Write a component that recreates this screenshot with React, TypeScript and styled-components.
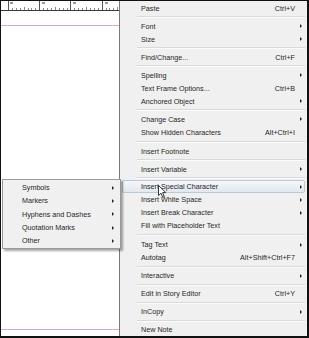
import React from "react";
import styled, { createGlobalStyle } from "styled-components";

const Global = createGlobalStyle`
  html, body { margin: 0; padding: 0; background: #fff; }
  #root { width: 309px; height: 338px; }
`;

const Frame = styled.div`
  position: relative;
  width: 309px;
  height: 338px;
  box-sizing: border-box;
  border: 1px solid #111;
  border-right-width: 2px;
  border-bottom-width: 2px;
  display: flex;
  overflow: hidden;
  font-family: "Liberation Sans", Arial, sans-serif;
  font-size: 7.2px;
  color: #262626;
`;

const Canvas = styled.div`
  width: 118px;
  flex: none;
  background: #fff;
  border-right: 1px solid #7a7a7a;
  display: flex;
  flex-direction: column;
`;

const Ruler = styled.div`
  height: 9px;
  border-bottom: 1px solid #3a3a3a;
  flex: none;
`;

const PinkGap = styled.div<{ $h: number }>`
  height: ${(p) => p.$h}px;
  flex: none;
`;

const PinkLine = styled.div`
  height: 1px;
  background: #d8a4d8;
  flex: none;
`;

const Spacer = styled.div`
  flex: 1;
`;

const Menu = styled.div`
  flex: 1;
  background: #f0f0f0;
  padding: 1px 0 0;
  display: flex;
  flex-direction: column;
`;

const Row = styled.div<{ $active?: boolean }>`
  position: relative;
  height: 13px;
  margin: 0 2px;
  box-sizing: border-box;
  display: grid;
  grid-template-columns: 1fr auto 9px;
  align-items: center;
  padding-left: 18px;
  border: 1px solid ${(p) => (p.$active ? "#bcc8d6" : "transparent")};
  border-radius: 2px;
  background: ${(p) =>
    p.$active ? "linear-gradient(#f5f7f9, #e2e8ee)" : "transparent"};
  white-space: nowrap;
  line-height: 11px;
`;

const Label = styled.span``;

const Shortcut = styled.span`
  text-align: right;
`;

const ArrowCell = styled.span`
  display: flex;
  justify-content: flex-end;
  padding-right: 2px;
`;

const Arrow = styled.i`
  display: block;
  width: 0;
  height: 0;
  border-top: 2px solid transparent;
  border-bottom: 2px solid transparent;
  border-left: 2.5px solid #222;
`;

const Sep = styled.div<{ $h?: number }>`
  height: ${(p) => p.$h ?? 5}px;
  display: flex;
  align-items: center;
  padding-left: 17px;
  padding-right: 2px;
  &::after {
    content: "";
    flex: 1;
    height: 1px;
    background: #d9d9d9;
    border-bottom: 1px solid #fbfbfb;
  }
`;

const SubMenu = styled.div`
  position: absolute;
  left: 1px;
  top: 178px;
  width: 119px;
  box-sizing: border-box;
  background: #f0f0f0;
  border: 1px solid #9a9a9a;
  box-shadow: 2px 2px 2px rgba(0, 0, 0, 0.35);
  padding: 1px 0 1px;
  display: flex;
  flex-direction: column;
  z-index: 2;
`;

const SubRow = styled.div`
  height: 13.3px;
  display: grid;
  grid-template-columns: 1fr 9px;
  align-items: center;
  padding-left: 19px;
  padding-right: 4px;
  white-space: nowrap;
`;

const Cursor = styled.svg`
  position: absolute;
  left: 157px;
  top: 184px;
  z-index: 3;
`;

type Item =
  | { t: "item"; label: string; sc?: string; sub?: boolean; active?: boolean }
  | { t: "sep"; h?: number };

const items: Item[] = [
  { t: "item", label: "Paste", sc: "Ctrl+V" },
  { t: "sep" },
  { t: "item", label: "Font", sub: true },
  { t: "item", label: "Size", sub: true },
  { t: "sep" },
  { t: "item", label: "Find/Change...", sc: "Ctrl+F" },
  { t: "sep" },
  { t: "item", label: "Spelling", sub: true },
  { t: "item", label: "Text Frame Options...", sc: "Ctrl+B" },
  { t: "item", label: "Anchored Object", sub: true },
  { t: "sep" },
  { t: "item", label: "Change Case", sub: true },
  { t: "item", label: "Show Hidden Characters", sc: "Alt+Ctrl+I" },
  { t: "sep", h: 6 },
  { t: "item", label: "Insert Footnote" },
  { t: "sep" },
  { t: "item", label: "Insert Variable", sub: true },
  { t: "sep" },
  { t: "item", label: "Insert Special Character", sub: true, active: true },
  { t: "item", label: "Insert White Space", sub: true },
  { t: "item", label: "Insert Break Character", sub: true },
  { t: "item", label: "Fill with Placeholder Text" },
  { t: "sep", h: 6 },
  { t: "item", label: "Tag Text", sub: true },
  { t: "item", label: "Autotag", sc: "Alt+Shift+Ctrl+F7" },
  { t: "sep" },
  { t: "item", label: "Interactive", sub: true },
  { t: "sep" },
  { t: "item", label: "Edit in Story Editor", sc: "Ctrl+Y" },
  { t: "sep" },
  { t: "item", label: "InCopy", sub: true },
  { t: "sep" },
  { t: "item", label: "New Note" },
];

const subItems = ["Symbols", "Markers", "Hyphens and Dashes", "Quotation Marks", "Other"];

function RulerTicks() {
  const ticks: React.ReactNode[] = [];
  const majors = [7, 39, 70, 102];
  for (let i = 0; i < 33; i++) {
    const x = 7 + i * 3.9;
    if (x > 117) break;
    const isMajor = i % 8 === 0;
    const isMid = i % 4 === 0;
    const h = isMajor ? 9 : isMid ? 3 : 2;
    ticks.push(
      <line key={i} x1={Math.round(x) + 0.5} x2={Math.round(x) + 0.5} y1={9 - h} y2={9} stroke={isMajor ? "#555" : "#8a8a8a"} strokeWidth={1} />
    );
  }
  return (
    <svg width="118" height="9" style={{ display: "block" }}>
      {ticks}
      {majors.map((m) => (
        <rect key={m} x={m + 2} y={1} width={3} height={2} fill="#999" />
      ))}
    </svg>
  );
}

export default function App() {
  return (
    <>
      <Global />
      <Frame>
        <Canvas>
          <Ruler>
            <RulerTicks />
          </Ruler>
          <PinkGap $h={14} />
          <PinkLine />
          <Spacer />
          <PinkLine />
          <PinkGap $h={6} />
        </Canvas>
        <Menu>
          {items.map((it, i) =>
            it.t === "sep" ? (
              <Sep key={i} $h={it.h} />
            ) : (
              <Row key={i} $active={it.active}>
                <Label>{it.label}</Label>
                <Shortcut>{it.sc ?? ""}</Shortcut>
                <ArrowCell>{it.sub ? <Arrow /> : null}</ArrowCell>
              </Row>
            )
          )}
        </Menu>
        <SubMenu>
          {subItems.map((s) => (
            <SubRow key={s}>
              <Label>{s}</Label>
              <ArrowCell>
                <Arrow />
              </ArrowCell>
            </SubRow>
          ))}
        </SubMenu>
        <Cursor width="9" height="13" viewBox="0 0 9 13">
          <path d="M0.5 0.5 L0.5 10.5 L3 8.2 L4.8 12.3 L6.3 11.6 L4.6 7.6 L7.8 7.6 Z" fill="#fff" stroke="#222" strokeWidth="0.9" strokeLinejoin="round" />
        </Cursor>
      </Frame>
    </>
  );
}
